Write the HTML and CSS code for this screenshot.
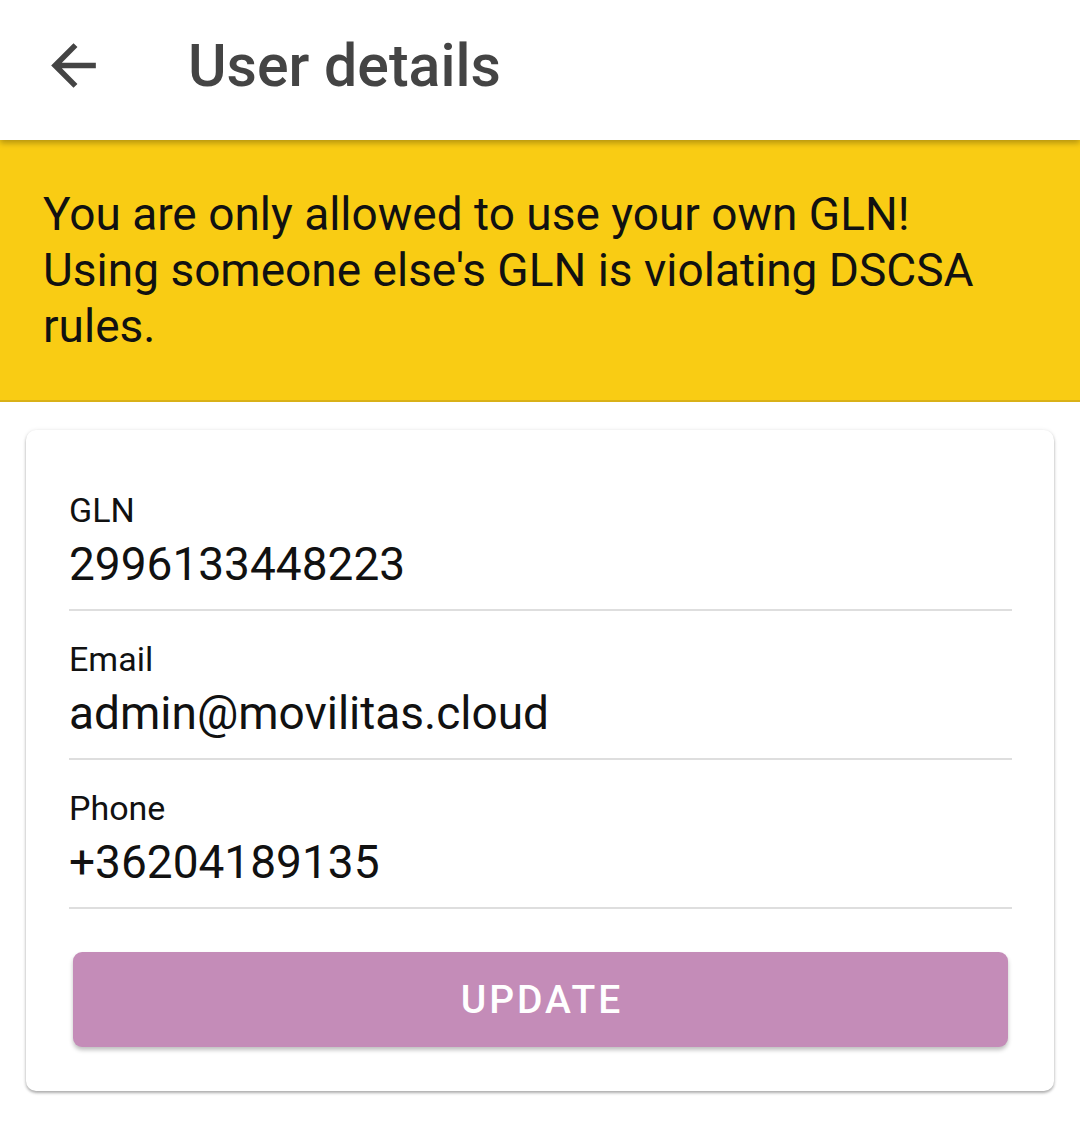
FILE: index.html
```html
<!DOCTYPE html>
<html lang="en">
<head>
<meta charset="utf-8">
<title>User details</title>
<link rel="stylesheet" href="styles.css">
</head>
<body>
<header class="appbar">
  <svg class="back" viewBox="0 0 24 24" aria-hidden="true"><path d="M20 11H7.83l5.59-5.59L12 4l-8 8 8 8 1.41-1.41L7.83 13H20v-2z"/></svg>
  <h1 class="title">User details</h1>
</header>
<div class="banner">You are only allowed to use your own GLN! Using someone else's GLN is violating DSCSA rules.</div>
<main class="card">
  <div class="field">
    <div class="label">GLN</div>
    <div class="value">2996133448223</div>
  </div>
  <div class="field">
    <div class="label">Email</div>
    <div class="value">admin@movilitas.cloud</div>
  </div>
  <div class="field">
    <div class="label">Phone</div>
    <div class="value">+36204189135</div>
  </div>
  <button class="update" type="button">UPDATE</button>
</main>
</body>
</html>
```
FILE: styles.css
```css
html, body {
  margin: 0;
  padding: 0;
  background: #ffffff;
  font-family: Roboto, "Noto Sans", sans-serif;
}
body {
  width: 1080px;
  height: 1126px;
  overflow: hidden;
}
.appbar {
  position: relative;
  z-index: 2;
  box-sizing: border-box;
  height: 140px;
  display: flex;
  align-items: center;
  padding: 0 0 10px 40px;
  background: #ffffff;
  box-shadow: 0 3px 6px rgba(0, 0, 0, 0.28);
}
.back {
  width: 67px;
  height: 67px;
  fill: #444444;
  flex: none;
}
.title {
  margin: 0 0 0 81px;
  font-size: 59px;
  font-weight: 500;
  color: #444444;
  line-height: 1;
}
.banner {
  background: #f9cc14;
  color: #111111;
  font-size: 46px;
  line-height: 56px;
  padding: 46px 60px 46px 43px;
  border-bottom: 2px solid #d9b118;
}
.card {
  margin: 28px 26px 0 26px;
  background: #ffffff;
  border-radius: 10px;
  box-shadow: 0 2px 3px rgba(0, 0, 0, 0.3), 0 0 4px rgba(0, 0, 0, 0.08);
  padding: 60px 42px 44px 43px;
}
.field {
  border-bottom: 2px solid #dedede;
  padding-bottom: 20px;
  margin-bottom: 28px;
}
.field:last-of-type {
  margin-bottom: 43px;
}
.label {
  font-size: 34px;
  line-height: 40px;
  color: #111111;
}
.value {
  margin-top: 9px;
  font-size: 46px;
  line-height: 50px;
  color: #111111;
}
.update {
  display: block;
  width: calc(100% - 8px);
  margin: 0 4px;
  height: 95px;
  border: none;
  border-radius: 9px;
  background: #c48cb8;
  color: #ffffff;
  font-family: Roboto, "Noto Sans", sans-serif;
  font-size: 39px;
  font-weight: 500;
  letter-spacing: 3px;
  text-indent: 3px;
  box-shadow: 0 3px 4px rgba(0, 0, 0, 0.25);
}
```
